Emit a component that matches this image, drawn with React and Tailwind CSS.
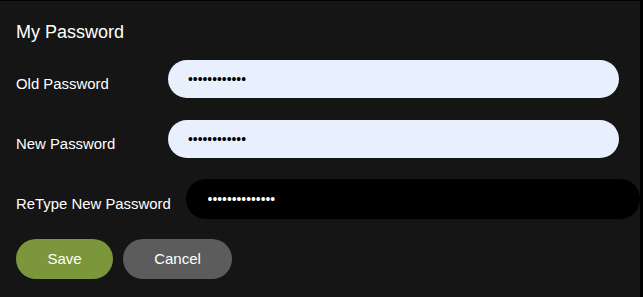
import { useState } from 'react';

function Field({ label, value, dark, rowClass, labelClass }) {
  const inputTone = dark
    ? 'bg-black text-white pl-[22px] h-[40px] w-[455px]'
    : 'bg-[#e8f0fe] text-black pl-[20px] h-[38px] w-[451px]';
  return (
    <div className={`flex items-start ${rowClass}`}>
      <label className={`min-w-[137px] mr-[15px] text-[14.9px] leading-[15px] text-white whitespace-nowrap ${labelClass}`}>
        {label}
      </label>
      <input
        type="password"
        readOnly
        value={value}
        className={`rounded-full outline-none text-[13.8px] ${inputTone}`}
      />
    </div>
  );
}

export default function App() {
  const [oldPw] = useState('oldpassword1');
  const [newPw] = useState('newpassword1');
  const [retype] = useState('newpassword123');

  return (
    <div className="w-[643px] h-[297px] bg-black font-['Liberation_Sans',Arial,sans-serif]">
      <div className="w-[640px] h-[297px] bg-[#151515] border-t border-black pl-[16px]">
        <h2 className="pt-[22px] text-[18px] leading-[18px] text-white">My Password</h2>

        <Field label="Old Password" value={oldPw} rowClass="mt-[19px]" labelClass="mt-[17px]" />
        <Field label="New Password" value={newPw} rowClass="mt-[22px]" labelClass="mt-[17px]" />
        <Field label="ReType New Password" value={retype} dark rowClass="mt-[21px]" labelClass="mt-[18px]" />

        <div className="flex gap-[10px] mt-[20px]">
          <button className="h-[40px] w-[97px] rounded-full bg-[#7b963b] text-white text-[15px]">Save</button>
          <button className="h-[40px] w-[109px] rounded-full bg-[#5c5c5c] text-white text-[15px]">Cancel</button>
        </div>
      </div>
    </div>
  );
}
